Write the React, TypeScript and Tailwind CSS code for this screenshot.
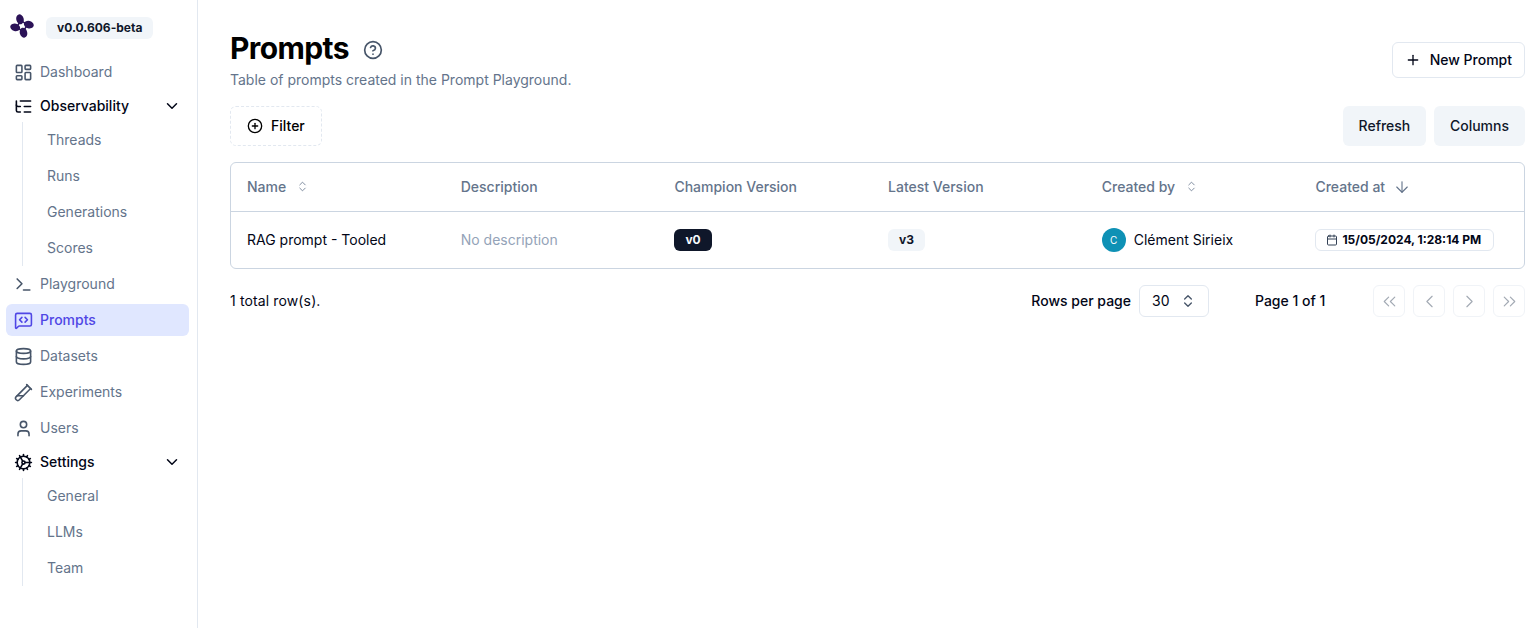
import {
  ArrowDown,
  Calendar,
  ChevronDown,
  ChevronLeft,
  ChevronRight,
  ChevronsLeft,
  ChevronsRight,
  ChevronsUpDown,
  CircleHelp,
  CirclePlus,
  Cog,
  Database,
  LayoutDashboard,
  ListTree,
  MessageSquareCode,
  Plus,
  Terminal,
  TestTube2,
  User,
} from "lucide-react";
import type { ReactNode } from "react";

function Logo() {
  return (
    <svg width="24" height="24" viewBox="0 0 24 24" fill="#2b1257" className="-mt-1 shrink-0">
      <path d="M11 6.5 L17.5 11 L13 17.5 L6.5 13 Z" fill="none" stroke="#2b1257" strokeWidth="1.5" />
      <ellipse cx="10" cy="5.3" rx="3.7" ry="5" transform="rotate(-15 10 5.3)" />
      <ellipse cx="18.8" cy="10.6" rx="5" ry="3.7" transform="rotate(15 18.8 10.6)" />
      <ellipse cx="13.5" cy="18.7" rx="3.7" ry="5" transform="rotate(-15 13.5 18.7)" />
      <ellipse cx="5.2" cy="13.4" rx="5" ry="3.7" transform="rotate(15 5.2 13.4)" />
    </svg>
  );
}

function NavItem({ icon, label, active }: { icon: ReactNode; label: string; active?: boolean }) {
  return (
    <div className={`flex h-8 items-center gap-[7.5px] rounded-md pl-[7.5px] text-sm ${active ? "bg-[#e0e7ff] font-medium text-[#4f46e5]" : "text-[#64748b]"}`}>
      <span className={active ? "text-[#4f46e5]" : "text-[#475569]"}>{icon}</span>
      {label}
    </div>
  );
}

function NavGroup({ icon, label, items }: { icon: ReactNode; label: string; items: string[] }) {
  return (
    <>
      <div className="flex h-7 items-center gap-[7.5px] pl-[7.5px] pr-2 text-sm font-medium text-[#020617]">
        {icon}
        <span className="flex-1">{label}</span>
        <ChevronDown size={18} />
      </div>
      <div className="-my-0.5 ml-4 flex flex-col gap-1 border-l border-[#e2e8f0] py-0.5 pl-6">
        {items.map((item) => (
          <div key={item} className="flex h-8 items-center text-sm text-[#64748b]">
            {item}
          </div>
        ))}
      </div>
    </>
  );
}

function Sidebar() {
  return (
    <aside className="h-[628px] w-[198px] shrink-0 border-r border-[#e2e8f0] pl-1.5 pr-2">
      <div className="flex h-14 items-center gap-3 pl-1">
        <Logo />
        <span className="rounded-md bg-[#f1f5f9] px-[11px] py-[2px] text-xs font-bold leading-[18px] text-[#0f172a]">v0.0.606-beta</span>
      </div>
      <nav className="flex flex-col gap-1">
        <NavItem icon={<LayoutDashboard size={19} />} label="Dashboard" />
        <NavGroup icon={<ListTree size={19} />} label="Observability" items={["Threads", "Runs", "Generations", "Scores"]} />
        <NavItem icon={<Terminal size={19} />} label="Playground" />
        <NavItem icon={<MessageSquareCode size={19} />} label="Prompts" active />
        <NavItem icon={<Database size={19} />} label="Datasets" />
        <NavItem icon={<TestTube2 size={19} />} label="Experiments" />
        <NavItem icon={<User size={19} />} label="Users" />
        <NavGroup icon={<Cog size={19} />} label="Settings" items={["General", "LLMs", "Team"]} />
      </nav>
    </aside>
  );
}

function HeaderCell({ label, icon }: { label: string; icon?: ReactNode }) {
  return (
    <th className="h-12 w-[213.7px] px-4 text-left align-middle text-sm font-medium text-[#64748b]">
      <div className="flex items-center gap-2">
        <span>{label}</span>
        {icon}
      </div>
    </th>
  );
}

function PageButton({ children }: { children: ReactNode }) {
  return <div className="flex h-8 w-8 items-center justify-center rounded-md border border-[#e2e8f0] text-[#475569] opacity-50">{children}</div>;
}

export default function App() {
  return (
    <div className="flex h-[628px] overflow-hidden bg-white font-['Inter',sans-serif] text-[#020617]">
      <Sidebar />
      <main className="min-w-0 flex-1 pl-8 pr-3.5">
        <div className="flex h-[106px] items-start justify-between">
          <div className="pt-[30px]">
            <div className="flex items-center gap-3.5">
              <h1 className="text-3xl font-bold leading-9 tracking-[-0.6px] text-black">Prompts</h1>
              <CircleHelp size={20} className="mt-1 text-[#475569]" />
            </div>
            <p className="mt-1 text-sm text-[#64748b]">Table of prompts created in the Prompt Playground.</p>
          </div>
          <button className="mt-[42px] flex h-9 items-center gap-[9px] rounded-md border border-[#e2e8f0] bg-white px-3 text-sm font-medium text-[#020617]">
            <Plus size={16} />
            New Prompt
          </button>
        </div>

        <div className="flex h-10 items-center justify-between">
          <button className="flex h-10 items-center gap-2 rounded-md border border-dashed border-[#e2e8f0] px-4 text-sm font-medium text-black">
            <CirclePlus size={16} />
            Filter
          </button>
          <div className="flex gap-2">
            <button className="h-10 w-[83px] rounded-md bg-[#f1f5f9] text-sm font-medium text-[#0f172a]">Refresh</button>
            <button className="h-10 rounded-md bg-[#f1f5f9] px-4 text-sm font-medium text-[#0f172a]">Columns</button>
          </div>
        </div>

        <div className="mt-4 overflow-hidden rounded-md border border-[#cbd5e1]">
          <table className="w-full table-fixed border-collapse text-sm">
            <thead>
              <tr className="border-b border-[#cbd5e1]">
                <HeaderCell label="Name" icon={<ChevronsUpDown size={13} strokeWidth={1.5} className="ml-[1.5px]" />} />
                <HeaderCell label="Description" />
                <HeaderCell label="Champion Version" />
                <HeaderCell label="Latest Version" />
                <HeaderCell label="Created by" icon={<ChevronsUpDown size={13} strokeWidth={1.5} className="ml-[1.5px]" />} />
                <th className="px-4 text-left text-sm font-medium text-[#64748b]">
                  <div className="flex items-center gap-2">
                    <span>Created at</span>
                    <ArrowDown size={18} strokeWidth={1.5} />
                  </div>
                </th>
              </tr>
            </thead>
            <tbody>
              <tr className="h-[57px]">
                <td className="px-4">RAG prompt - Tooled</td>
                <td className="px-4 text-[#94a3b8]">No description</td>
                <td className="px-4">
                  <span className="inline-block rounded-md bg-[#0f172a] px-[11px] py-[3px] align-middle text-xs font-bold text-[#f8fafc]">v0</span>
                </td>
                <td className="px-4">
                  <span className="inline-block rounded-md bg-[#f1f5f9] px-[11px] py-[3px] align-middle text-xs font-bold text-[#0f172a]">v3</span>
                </td>
                <td className="px-4">
                  <div className="flex items-center gap-2">
                    <span className="flex h-6 w-6 items-center justify-center rounded-full bg-[#0e91b5] text-[10px] text-white">C</span>
                    Clément Sirieix
                  </div>
                </td>
                <td className="px-4">
                  <span className="inline-flex items-center gap-1 whitespace-nowrap rounded-md border border-[#e2e8f0] py-0.5 pl-2.5 pr-[11.5px] align-middle text-xs font-bold text-[#020617]">
                    <Calendar size={12} className="text-[#334155]" />
                    15/05/2024, 1:28:14 PM
                  </span>
                </td>
              </tr>
            </tbody>
          </table>
        </div>

        <div className="mt-4 flex h-8 items-center text-sm">
          <span className="flex-1 tracking-[0.13px]">1 total row(s).</span>
          <span className="font-medium">Rows per page</span>
          <div className="ml-2 flex h-8 w-[70px] items-center justify-between rounded-md border border-[#e2e8f0] px-3">
            <span>30</span>
            <ChevronsUpDown size={16} className="text-[#475569]" />
          </div>
          <span className="ml-[46px] w-[118px] font-medium">Page 1 of 1</span>
          <div className="flex gap-2">
            <PageButton><ChevronsLeft size={21} strokeWidth={1.3} /></PageButton>
            <PageButton><ChevronLeft size={21} strokeWidth={1.3} /></PageButton>
            <PageButton><ChevronRight size={21} strokeWidth={1.3} /></PageButton>
            <PageButton><ChevronsRight size={21} strokeWidth={1.3} /></PageButton>
          </div>
        </div>
      </main>
    </div>
  );
}
